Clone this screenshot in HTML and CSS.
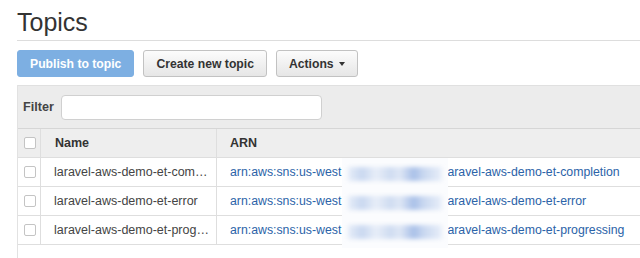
FILE: index.html
```html
<!DOCTYPE html>
<html lang="en">
<head>
    <meta charset="UTF-8">
    <title>Topics</title>
    <link rel="stylesheet" href="styles.css">
</head>
<body>
<div id="page">
    <h1 class="title">Topics</h1>
    <div class="toolbar">
        <button class="btn btn-primary">Publish to topic</button>
        <button class="btn">Create new topic</button>
        <button class="btn">Actions <span class="caret"></span></button>
    </div>
    <div class="panel">
        <div class="filter">
            <label>Filter</label>
            <input type="text">
        </div>
        <div class="grid">
            <div class="row head">
                <div class="cell check"><span class="box"></span></div>
                <div class="cell name">Name</div>
                <div class="cell arn">ARN</div>
            </div>
            <div class="row">
                <div class="cell check"><span class="box"></span></div>
                <div class="cell name">laravel-aws-demo-et-com…</div>
                <div class="cell arn"><a>arn:aws:sns:us-west<span class="gap"></span>aravel-aws-demo-et-completion</a></div>
            </div>
            <div class="row">
                <div class="cell check"><span class="box"></span></div>
                <div class="cell name">laravel-aws-demo-et-error</div>
                <div class="cell arn"><a>arn:aws:sns:us-west<span class="gap"></span>aravel-aws-demo-et-error</a></div>
            </div>
            <div class="row">
                <div class="cell check"><span class="box"></span></div>
                <div class="cell name">laravel-aws-demo-et-prog…</div>
                <div class="cell arn"><a>arn:aws:sns:us-west<span class="gap"></span>aravel-aws-demo-et-progressing</a></div>
            </div>
            <!-- blurred account id -->
            <div class="smudge">
                <div class="blob"></div>
                <div class="blob"></div>
                <div class="blob"></div>
            </div>
        </div>
    </div>
</div>
</body>
</html>
```

FILE: styles.css
```css
body{margin:0;font-family:"Liberation Sans",Arial,sans-serif;color:#444;background:#fff;}
#page{padding-left:17px;}
.title{
    font-size:25px;
    font-weight:normal;
    line-height:30px;
    color:#333;
    margin:7px 0 0;
    padding-bottom:3px;
    border-bottom:1px solid #ddd;
}
.toolbar{display:flex;gap:9px;margin-top:9px;}
.btn{
    height:27px;
    padding:0 12px;
    font:bold 12.2px "Liberation Sans",Arial,sans-serif;
    color:#333;
    white-space:nowrap;
    border:1px solid #c2c2c2;
    border-radius:3px;
    background:linear-gradient(#fcfcfc,#e6e6e6);
    display:flex;
    align-items:center;
    gap:5px;
}
.btn-primary{
    background:#7dafe2;
    border-color:#7dafe2;
    color:#fff;
}
.caret{
    width:0;height:0;
    border-left:3.5px solid transparent;
    border-right:3.5px solid transparent;
    border-top:4px solid #333;
}
.panel{
    margin-top:8px;
    border-left:1px solid #e2e2e2;
    min-height:173px;
}
.filter{
    background:#ececec;
    border-top:1px solid #e0e0e0;
    border-bottom:1px solid #d6d6d6;
    display:flex;
    align-items:center;
    padding-left:5px;
    box-sizing:border-box;
    height:44px;
}
.filter label{font-weight:bold;font-size:12.6px;color:#444;}
.filter input{
    margin-left:7px;
    width:261px;
    height:25px;
    box-sizing:border-box;
    border:1px solid #d0d0d0;
    border-radius:4px;
    background:#fff;
    margin-top:1px;
}
.grid{position:relative;}
.row{
    display:grid;
    grid-template-columns:23px 176px 1fr;
    height:28px;
    border-bottom:1px solid #dedede;
    font-size:12.5px;
}
.row.head{background:#eeeeee;font-weight:bold;color:#333;}
.cell{display:flex;align-items:center;white-space:nowrap;overflow:hidden;}
.cell.check{justify-content:center;padding-left:2px;border-right:1px solid #dedede;}
.cell.name{padding-left:13px;border-right:1px solid #dedede;}
.cell.arn{padding-left:13px;}
.head .cell.name{padding-left:14px;}
.box{
    width:10px;height:10px;
    border:1px solid #c4c4c4;
    border-radius:2px;
    background:#fff;
}
.row a{color:#2b63a8;font-size:12.3px;}
.gap{display:inline-block;width:106px;}
.smudge{
    position:absolute;
    left:324px;
    top:29px;
    width:106px;
    height:90px;
    background:#fbfcfe;
    display:flex;
    flex-direction:column;
    justify-content:space-around;
    padding:2px 0;
    box-sizing:border-box;
}
.blob{
    height:14px;
    margin:0 6px;
    background:linear-gradient(90deg,#e6edf8 0%,#c9d8f0 15%,#e8eef8 30%,#cfdcf1 45%,#dfe7f5 55%,#a9c0e8 70%,#c8d7f0 80%,#e9eff9 100%);
    filter:blur(2px);
}
```
